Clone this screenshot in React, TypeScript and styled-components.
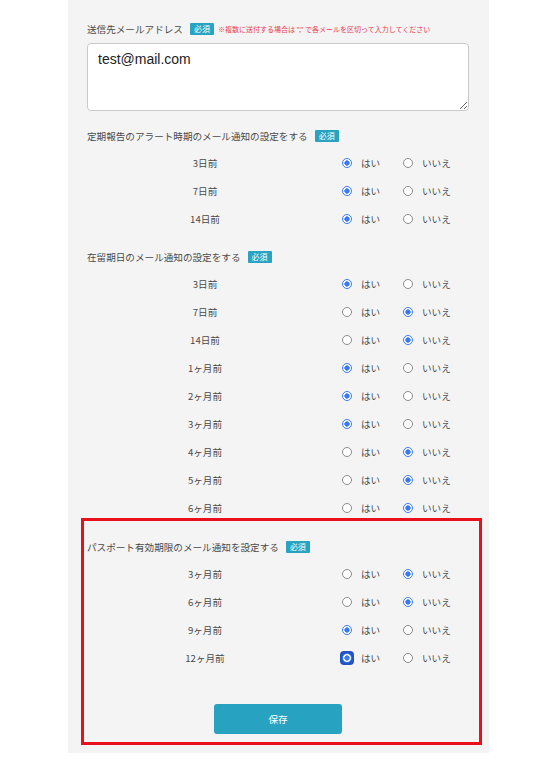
import React from "react";
import styled, { createGlobalStyle } from "styled-components";

const Global = createGlobalStyle`
  html, body { margin: 0; padding: 0; background: #ffffff; }
  body { font-family: "Noto Sans CJK JP", "Noto Sans", sans-serif; color: #4a4a4a; }
  * { box-sizing: border-box; }
`;

const Panel = styled.div`
  margin-left: 68px;
  width: 421px;
  background: #f4f4f4;
  padding: 21px 20px 8px 19px;
  display: flex;
  flex-direction: column;
`;

const Section = styled.section<{ $top?: number }>`
  display: flex;
  flex-direction: column;
  margin-top: ${(p) => p.$top ?? 0}px;
`;

const Highlight = styled.section`
  margin: 0 -13px 0 -6px;
  border: 3px solid #e8101c;
  padding: 18px 10px 8px 3px;
  display: flex;
  flex-direction: column;
`;

const LabelRow = styled.div`
  display: flex;
  align-items: center;
  height: 16px;
  font-size: 9.6px;
  line-height: 16px;
  color: #4a4a4a;
  white-space: nowrap;
`;

const Badge = styled.span`
  display: inline-flex;
  align-items: center;
  justify-content: center;
  height: 12px;
  padding: 0 4px;
  margin-left: 7px;
  background: #28a3c1;
  color: #fff;
  font-size: 8px;
  line-height: 12px;
  border-radius: 1px;
`;

const Note = styled.span`
  margin-left: 4px;
  font-size: 7px;
  color: #e83a52;
`;

const TextArea = styled.textarea`
  margin-top: 6px;
  height: 68px;
  width: 100%;
  border: 1px solid #c9c9c9;
  border-radius: 4px;
  background: #fff;
  padding: 7px 10px;
  font-family: "Liberation Sans", Arial, sans-serif;
  font-size: 14px;
  color: #222;
  resize: vertical;
  outline: none;
`;

const Rows = styled.div`
  margin-top: 9px;
  display: flex;
  flex-direction: column;
  gap: 8px;
`;

const Row = styled.div`
  display: grid;
  grid-template-columns: 236px 1fr;
  align-items: center;
  height: 20px;
  font-size: 9.6px;
  color: #4a4a4a;
`;

const RowLabel = styled.div`
  text-align: center;
`;

const Options = styled.div`
  display: flex;
  align-items: center;
  padding-left: 19px;
`;

const Option = styled.label`
  display: flex;
  align-items: center;
  width: 61px;
  gap: 9px;
  cursor: pointer;
`;

const RadioMark = styled.span<{ $checked: boolean }>`
  width: 10px;
  height: 10px;
  border-radius: 50%;
  flex: none;
  border: ${(p) => (p.$checked ? "1.5px solid #3a7bf2" : "1px solid #8c8c8c")};
  background: ${(p) =>
    p.$checked
      ? "radial-gradient(circle, #3a7bf2 0 2.4px, #ffffff 2.9px)"
      : "#ffffff"};
`;

const FocusRing = styled.span`
  width: 14px;
  height: 14px;
  margin: -2px;
  border-radius: 4px;
  background: #2453c2;
  display: grid;
  place-items: center;
  flex: none;
`;

const Footer = styled.div`
  margin-top: 36px;
  display: flex;
  justify-content: center;
`;

const SaveButton = styled.button`
  width: 128px;
  height: 30px;
  border: none;
  border-radius: 3px;
  background: #27a3c1;
  color: #fff;
  font-family: "Noto Sans CJK JP", sans-serif;
  font-size: 9.6px;
  cursor: pointer;
`;

type RowData = { label: string; yes: boolean; focus?: boolean };

function Radio({ checked, focus }: { checked: boolean; focus?: boolean }) {
  const mark = <RadioMark $checked={checked} role="radio" aria-checked={checked} />;
  return focus ? <FocusRing>{mark}</FocusRing> : mark;
}

function ChoiceRow({ row }: { row: RowData }) {
  return (
    <Row>
      <RowLabel>{row.label}</RowLabel>
      <Options>
        <Option>
          <Radio checked={row.yes} focus={row.focus} />
          はい
        </Option>
        <Option>
          <Radio checked={!row.yes} />
          いいえ
        </Option>
      </Options>
    </Row>
  );
}

const report: RowData[] = [
  { label: "3日前", yes: true },
  { label: "7日前", yes: true },
  { label: "14日前", yes: true },
];

const stay: RowData[] = [
  { label: "3日前", yes: true },
  { label: "7日前", yes: false },
  { label: "14日前", yes: false },
  { label: "1ヶ月前", yes: true },
  { label: "2ヶ月前", yes: true },
  { label: "3ヶ月前", yes: true },
  { label: "4ヶ月前", yes: false },
  { label: "5ヶ月前", yes: false },
  { label: "6ヶ月前", yes: false },
];

const passport: RowData[] = [
  { label: "3ヶ月前", yes: false },
  { label: "6ヶ月前", yes: false },
  { label: "9ヶ月前", yes: true },
  { label: "12ヶ月前", yes: true, focus: true },
];

export default function App() {
  return (
    <>
      <Global />
      <Panel>
        <Section>
          <LabelRow>
            送信先メールアドレス
            <Badge>必須</Badge>
            <Note>※複数に送付する場合は "," で各メールを区切って入力してください</Note>
          </LabelRow>
          <TextArea defaultValue="test@mail.com" />
        </Section>
        <Section $top={17}>
          <LabelRow>
            定期報告のアラート時期のメール通知の設定をする
            <Badge>必須</Badge>
          </LabelRow>
          <Rows>
            {report.map((r) => (
              <ChoiceRow key={r.label} row={r} />
            ))}
          </Rows>
        </Section>
        <Section $top={20}>
          <LabelRow>
            在留期日のメール通知の設定をする
            <Badge>必須</Badge>
          </LabelRow>
          <Rows>
            {stay.map((r) => (
              <ChoiceRow key={r.label} row={r} />
            ))}
          </Rows>
        </Section>
        <Highlight>
          <LabelRow>
            パスポート有効期限のメール通知を設定する
            <Badge>必須</Badge>
          </LabelRow>
          <Rows>
            {passport.map((r) => (
              <ChoiceRow key={r.label} row={r} />
            ))}
          </Rows>
          <Footer>
            <SaveButton>保存</SaveButton>
          </Footer>
        </Highlight>
      </Panel>
    </>
  );
}
